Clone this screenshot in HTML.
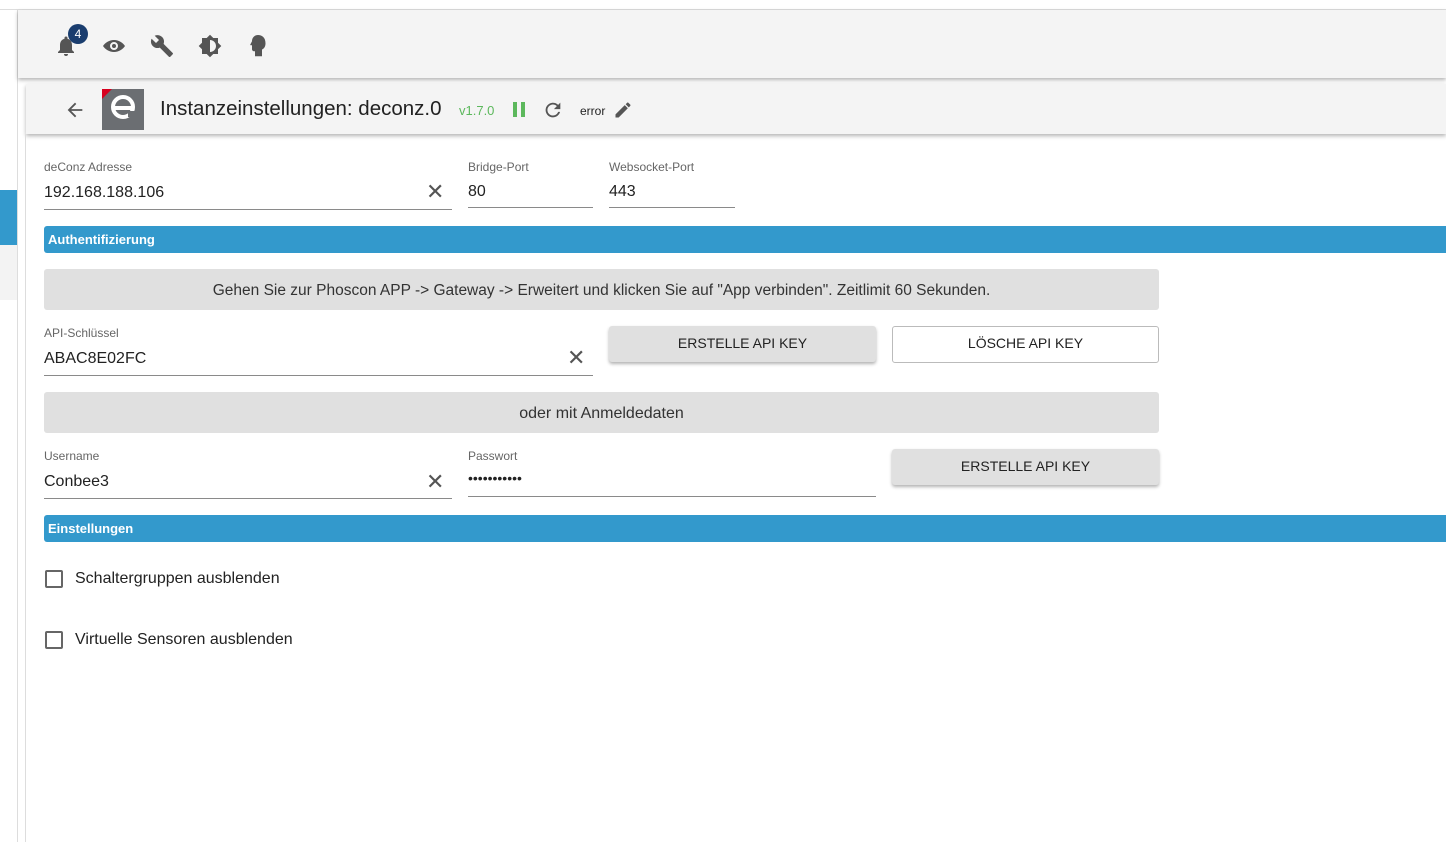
<!DOCTYPE html>
<html><head><meta charset="utf-8"><style>
body{margin:0;width:1446px;height:842px;overflow:hidden;background:#fff;font-family:"Liberation Sans",sans-serif;position:relative;color:#222}
.a{position:absolute}
.lbl{font-size:12px;color:#666}
.val{font-size:16px;color:#222}
.ul{border-bottom:1px solid #8a8a8a}
.bar{background:#3399cc;color:#fff;font-weight:bold;font-size:13px;border-radius:3px 0 0 3px;height:27px;line-height:28px;padding-left:4px;box-sizing:border-box}
.grey{background:#e0e0e0;border-radius:3px;text-align:center;font-size:16px;color:#333;line-height:43px;height:41px}
.btn{background:#e0e0e0;border-radius:3px;box-shadow:0 2px 3px rgba(0,0,0,.3);text-align:center;font-size:14px;line-height:34px;height:36px;color:#222}
.x{font-size:22px;color:#555}
.cb{width:14px;height:14px;border:2px solid #666;border-radius:2px}
</style></head><body>
<div class="a" style="left:0;top:0;width:1446px;height:9px;border-bottom:1px solid #ddd"></div>
<div class="a" style="left:17px;top:10px;width:1px;height:832px;background:#ddd"></div>
<div class="a" style="left:0;top:190px;width:17px;height:55px;background:#3399cc"></div>
<div class="a" style="left:0;top:245px;width:17px;height:55px;background:#f3f3f3"></div>
<div class="a" style="left:18px;top:10px;width:1428px;height:68px;background:#f4f4f4;box-shadow:0 2px 4px rgba(0,0,0,.3)"></div>
<svg class="a" style="left:54px;top:34px" width="220" height="24" viewBox="0 0 220 24" fill="#555">
<path d="M12 22a2 2 0 0 0 2-2h-4a2 2 0 0 0 2 2zm6-6v-5c0-3-1.6-5.6-4.5-6.3V4a1.5 1.5 0 0 0-3 0v.7C7.6 5.4 6 8 6 11v5l-2 2v1h16v-1l-2-2z"/>
<path transform="translate(48,0)" d="M12 6C7 6 3 9 1 12c2 3 6 6 11 6s9-3 11-6c-2-3-6-6-11-6zm0 10a4 4 0 1 1 0-8 4 4 0 0 1 0 8zm0-6a2 2 0 1 0 0 4 2 2 0 0 0 0-4z"/>
<path transform="translate(96,0)" d="M22.7 19l-9.1-9.1c.9-2.3.4-5-1.5-6.9-2-2-5-2.4-7.4-1.3L9 6 6 9 1.6 4.7C.4 7.1.9 10.1 2.9 12.1c1.9 1.9 4.6 2.4 6.9 1.5l9.1 9.1c.4.4 1 .4 1.4 0l2.3-2.3c.5-.4.5-1.1.1-1.4z"/>
<path transform="translate(144,0)" d="M20 8.7V4h-4.7L12 .7 8.7 4H4v4.7L.7 12 4 15.3V20h4.7l3.3 3.3 3.3-3.3H20v-4.7l3.3-3.3L20 8.7zM12 18V6c3.3 0 6 2.7 6 6s-2.7 6-6 6z"/>
<path transform="translate(192,0)" d="M12 1C8.5 1 6 3.8 6 7.3L4.3 10.5c-.2.3 0 .7.4.7H6v4c0 1.1.9 2 2 2h1v5h7v-6.7c2.4-1.1 3.5-3.3 3.5-6.3C19.5 3.6 16 1 12 1z"/>
</svg>
<div class="a" style="left:68px;top:24px;width:20px;height:20px;border-radius:50%;background:#1a3d6e;color:#fff;font-size:12px;text-align:center;line-height:20px">4</div>
<div class="a" style="left:26px;top:84px;width:1420px;height:50px;background:#f4f4f4;box-shadow:0 2px 4px rgba(0,0,0,.3)"></div>
<div class="a" style="left:25px;top:134px;width:1px;height:708px;background:#ddd"></div>
<svg class="a" style="left:64px;top:99px" width="22" height="22" viewBox="0 0 24 24" fill="#555"><path d="M20 11H7.8l5.6-5.6L12 4l-8 8 8 8 1.4-1.4L7.8 13H20z"/></svg>
<div class="a" style="left:102px;top:89px;width:42px;height:41px;background:#6b6e72;overflow:hidden">
<div class="a" style="left:0;top:0;width:0;height:0;border-top:10px solid #d7001e;border-right:10px solid transparent"></div>
<div class="a" style="left:9px;top:6px;width:24px;height:24px;border:4px solid #fff;border-radius:50%;box-sizing:border-box"></div>
<div class="a" style="left:11px;top:17px;width:20px;height:4px;background:#fff"></div>
<div class="a" style="left:26px;top:22px;width:8px;height:6px;background:#6b6e72"></div>
</div>
<div class="a" style="left:160px;top:97px;font-size:20.5px;color:#222">Instanzeinstellungen: deconz.0</div>
<div class="a" style="left:459px;top:103px;font-size:13px;color:#5cb85c">v1.7.0</div>
<div class="a" style="left:513px;top:102px;width:4px;height:15px;background:#5cb85c"></div>
<div class="a" style="left:521px;top:102px;width:4px;height:15px;background:#5cb85c"></div>
<svg class="a" style="left:542px;top:99px" width="22" height="22" viewBox="0 0 24 24" fill="#555"><path d="M17.6 6.4A8 8 0 1 0 19.7 14h-2.1a6 6 0 1 1-1.4-6.2L13 11h7V4z"/></svg>
<div class="a" style="left:580px;top:104px;font-size:12px;color:#222">error</div>
<svg class="a" style="left:613px;top:100px" width="20" height="20" viewBox="0 0 24 24" fill="#555"><path d="M3 17.2V21h3.8L17.8 9.9l-3.7-3.7zM20.7 7c.4-.4.4-1 0-1.4l-2.3-2.3c-.4-.4-1-.4-1.4 0l-1.8 1.8 3.7 3.7z"/></svg>

<div class="a lbl" style="left:44px;top:160px">deConz Adresse</div>
<div class="a val ul" style="left:44px;top:183px;width:408px;height:26px;line-height:20px">192.168.188.106</div>
<div class="a x" style="left:426px;top:179px">✕</div>
<div class="a lbl" style="left:468px;top:160px">Bridge-Port</div>
<div class="a val ul" style="left:468px;top:182px;width:125px;height:25px;line-height:20px">80</div>
<div class="a lbl" style="left:609px;top:160px">Websocket-Port</div>
<div class="a val ul" style="left:609px;top:182px;width:126px;height:25px;line-height:20px">443</div>

<div class="a bar" style="left:44px;top:226px;width:1402px">Authentifizierung</div>
<div class="a grey" style="left:44px;top:269px;width:1115px;font-size:15.5px">Gehen Sie zur Phoscon APP -&gt; Gateway -&gt; Erweitert und klicken Sie auf "App verbinden". Zeitlimit 60 Sekunden.</div>
<div class="a lbl" style="left:44px;top:326px">API-Schlüssel</div>
<div class="a val ul" style="left:44px;top:349px;width:549px;height:26px;line-height:20px">ABAC8E02FC</div>
<div class="a x" style="left:567px;top:345px">✕</div>
<div class="a btn" style="left:609px;top:326px;width:267px">ERSTELLE API KEY</div>
<div class="a" style="left:892px;top:326px;width:265px;height:35px;border:1px solid #bbb;border-radius:3px;text-align:center;font-size:14px;line-height:33px">LÖSCHE API KEY</div>
<div class="a grey" style="left:44px;top:392px;width:1115px">oder mit Anmeldedaten</div>
<div class="a lbl" style="left:44px;top:449px">Username</div>
<div class="a val ul" style="left:44px;top:472px;width:408px;height:26px;line-height:20px">Conbee3</div>
<div class="a x" style="left:426px;top:469px">✕</div>
<div class="a lbl" style="left:468px;top:449px">Passwort</div>
<div class="a val ul" style="left:468px;top:470px;width:408px;height:26px;font-size:14px">•••••••••••</div>
<div class="a btn" style="left:892px;top:449px;width:267px">ERSTELLE API KEY</div>

<div class="a bar" style="left:44px;top:515px;width:1402px">Einstellungen</div>
<div class="a cb" style="left:45px;top:570px"></div>
<div class="a val" style="left:75px;top:570px">Schaltergruppen ausblenden</div>
<div class="a cb" style="left:45px;top:631px"></div>
<div class="a val" style="left:75px;top:631px">Virtuelle Sensoren ausblenden</div>
</body></html>
